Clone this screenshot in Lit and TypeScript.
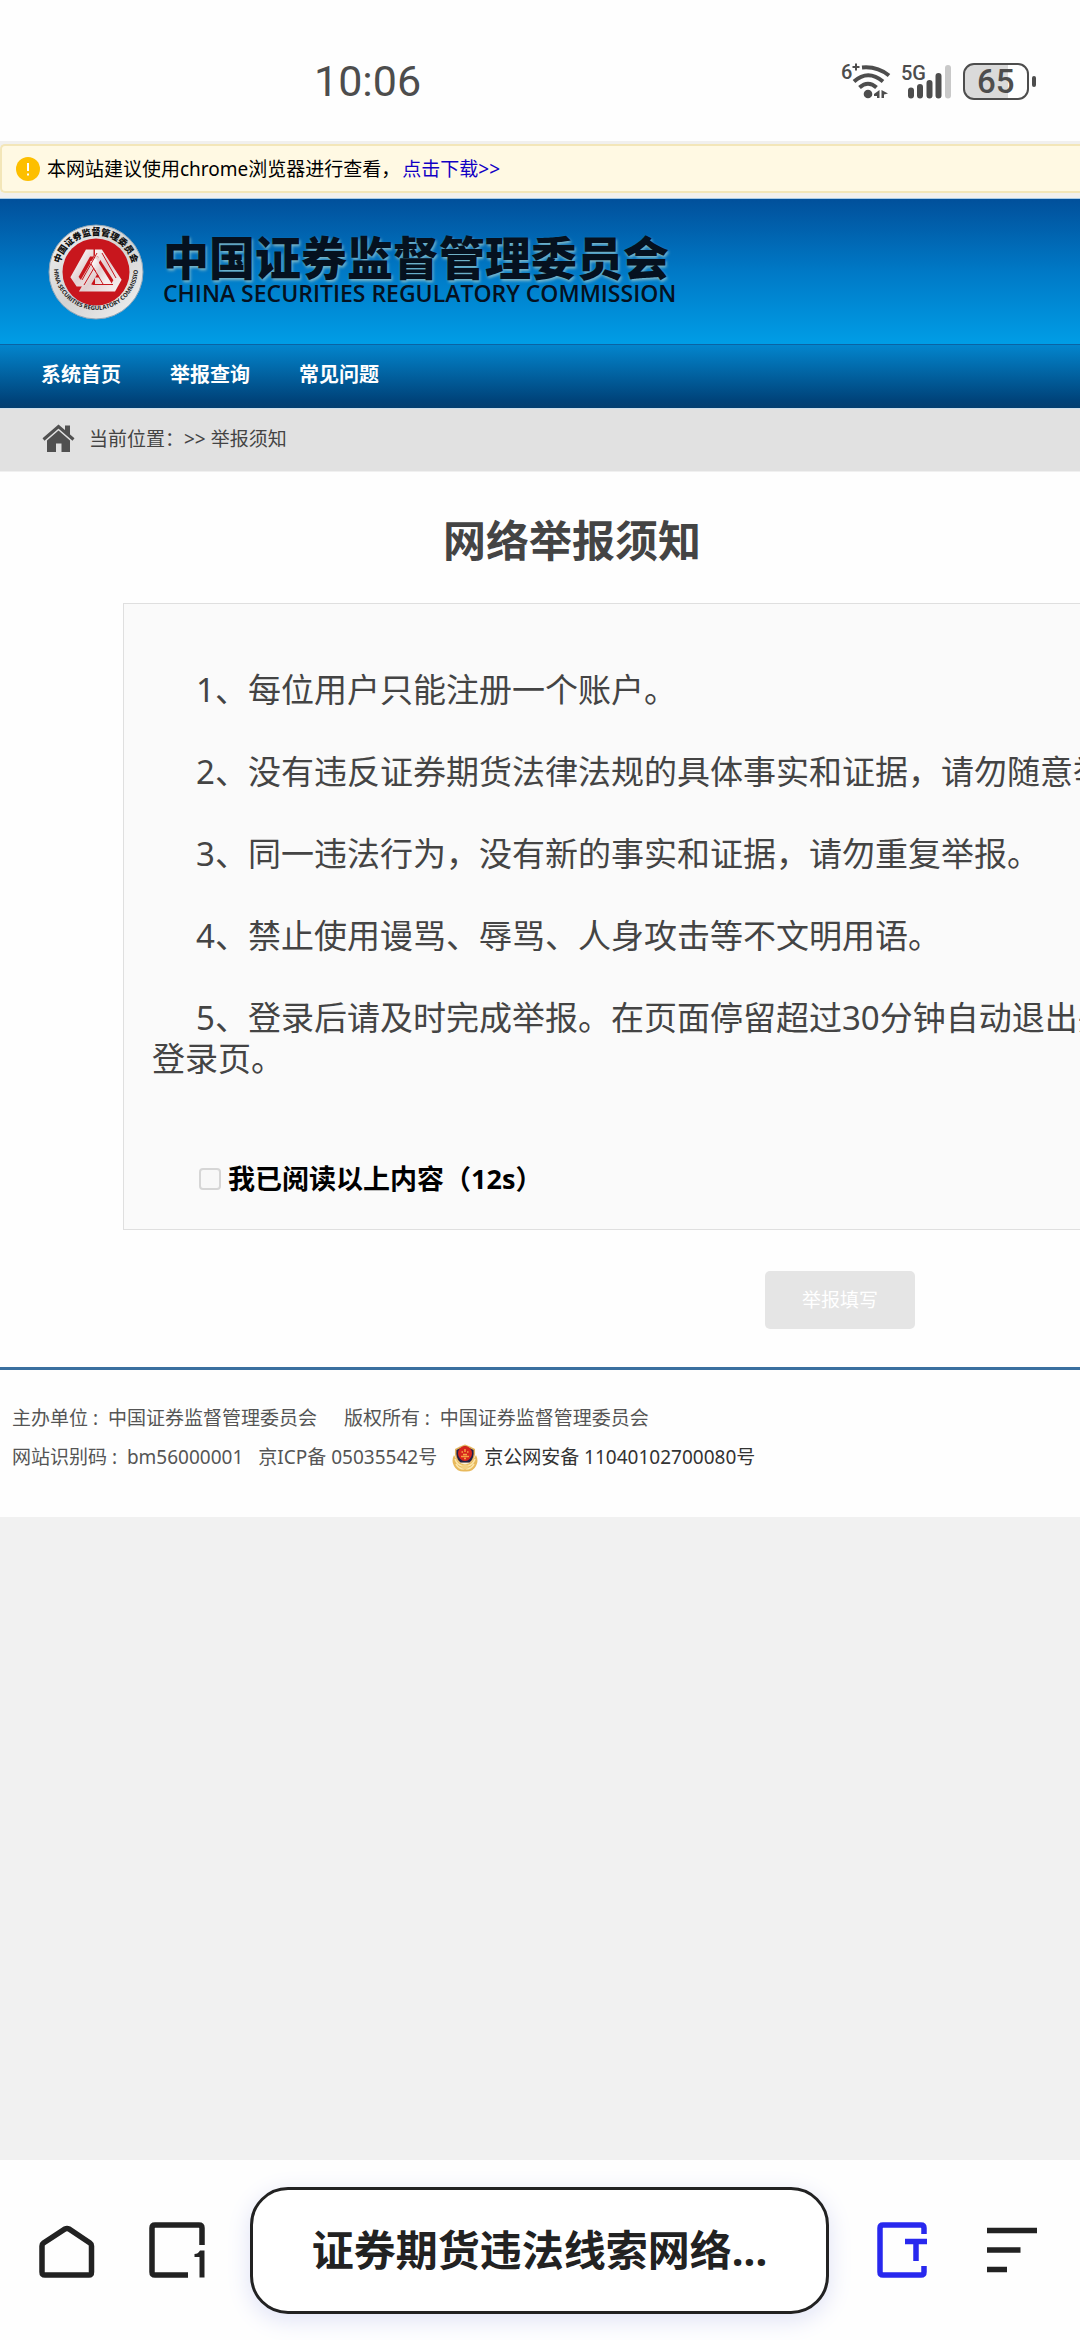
import { LitElement, html, css } from "lit";
import { customElement, state } from "lit/decorators.js";

@customElement("status-bar")
class StatusBar extends LitElement {
  static styles = css`
    :host { display: block; background: #fefefe; color: #4d4d4d; font-family: Roboto, "Noto Sans", sans-serif; }
    .bar { display: flex; align-items: center; justify-content: space-between; height: 141px; padding: 20px 43px 0 314px; box-sizing: border-box; }
    .clock { font-size: 43px; line-height: 48px; }
    .icons { display: flex; align-items: center; gap: 10px; }
    svg { display: block; }
    .tiny { font: 500 20px Roboto, sans-serif; fill: #4d4d4d; }
    .level { font: 500 33px Roboto, sans-serif; fill: #4d4d4d; }
  `;
  render() {
    return html`
      <div class="bar">
        <time class="clock">10:06</time>
        <div class="icons">
          <svg width="50" height="50" viewBox="842 55 50 50" role="img" aria-label="Wi-Fi">
            <text class="tiny" x="842" y="78">6</text>
            <path d="M853.500 66h7M857 62.500v7" stroke="#4d4d4d" stroke-width="2" />
            <g fill="none" stroke="#4d4d4d" stroke-width="4">
              <path d="M863 66.500Q878 65 890 74.500" />
              <path d="M855 80.500Q869 68 884 80.500" />
              <path d="M860.500 86.500Q869 79 877.500 86.500" />
            </g>
            <circle cx="869" cy="93" r="4.300" fill="#4d4d4d" />
            <path d="M880.500 89v8h-2.500v-2h-3v-2zM882.500 97v-8l6.500 3.500-4 1v3.500z" fill="#4d4d4d" />
          </svg>
          <svg width="51" height="50" viewBox="901 55 51 50" role="img" aria-label="5G">
            <text class="tiny" x="901" y="79">5G</text>
            <g stroke-width="6" stroke-linecap="round" stroke="#4d4d4d">
              <path d="M911 89.500V94.500M920 86V94.500M929.500 82V94.500M938.500 75V94.500" />
              <path d="M948 67V94.500" stroke="#c9c9c9" />
            </g>
          </svg>
          <svg width="75" height="50" viewBox="962 55 75 50" role="img" aria-label="65%">
            <path d="M974 63H1008V98H974Q965 98 965 88V73Q965 63 974 63Z" fill="#dadada" />
            <rect x="964" y="63" width="64" height="35" rx="10" fill="none" stroke="#4d4d4d" stroke-width="2" />
            <rect x="1032" y="75" width="4" height="11" rx="2" fill="#4d4d4d" />
            <text class="level" x="977" y="92">65</text>
          </svg>
        </div>
      </div>
    `;
  }
}

@customElement("site-header")
class SiteHeader extends LitElement {
  static styles = css`
    :host { display: block; }
    a { text-decoration: none; }
    .notice-wrap { background: #f1f0ee; padding: 3px 0 5px; border-bottom: 1px solid #a9cbe6; }
    .notice { display: flex; align-items: center; gap: 7px; height: 45px; padding-left: 14px; background: #fff9e3; border: 2px solid #f3e6b8; border-right: 0; border-radius: 5px 0 0 5px; font-size: 19px; line-height: 28px; color: #000; white-space: nowrap; }
    .notice a { color: #1200c4; margin-left: 2px; }
    .brand { display: flex; align-items: center; gap: 18px; height: 145px; padding-left: 47px; background: linear-gradient(#01509b, #0079c6 50%, #009de6); box-sizing: border-box; }
    .names { display: flex; flex-direction: column; padding-bottom: 6px; color: #05111f; white-space: nowrap; }
    .cn { font-size: 46px; line-height: 48px; font-weight: 900; text-shadow: 1px 2px 3px #7db9c9; }
    .en { font-family: "Open Sans", sans-serif; font-size: 23px; line-height: 24px; font-weight: 600; }
    .seal-cn { font-size: 9px; font-weight: 900; fill: #111; }
    .seal-en { font: 700 6px "Open Sans", sans-serif; fill: #222; }
    nav { display: flex; gap: 49px; align-items: center; height: 64px; padding: 0 0 4px 41px; background: linear-gradient(#0385cd, #00437a 88%, #043f70); border-top: 1px solid #0b63a4; box-sizing: border-box; }
    nav a { color: #fff; font-weight: 700; font-size: 20px; line-height: 28px; }
    .crumbs { display: flex; align-items: center; gap: 14px; height: 64px; padding: 0 0 3px 42px; background: #e1e1e1; border-bottom: 1px solid #f0f0f0; border-top: 1px solid #cfe0ec; box-sizing: border-box; color: #444; font-size: 19px; line-height: 28px; }
    svg { display: block; flex: none; }
  `;
  render() {
    return html`
      <div class="notice-wrap">
        <div class="notice">
          <svg width="24" height="24" viewBox="0 0 24 24" aria-hidden="true">
            <circle cx="12" cy="12" r="12" fill="#fdbf00" />
            <path d="M12 6v8M12 16.500v2" stroke="#fff" stroke-width="2" />
          </svg>
          <span>本网站建议使用chrome浏览器进行查看，<a href="#download">点击下载&gt;&gt;</a></span>
        </div>
      </div>
      <header class="brand">
        <svg width="98" height="98" viewBox="-49 -49 98 98" aria-hidden="true">
          <defs>
            <linearGradient id="rim" x1="0" y1="0" x2="1" y2="1">
              <stop offset="0" stop-color="#f4f4f4" /><stop offset=".5" stop-color="#d2d2d2" /><stop offset="1" stop-color="#f2f2f2" />
            </linearGradient>
            <linearGradient id="metal" x1="0" y1="0" x2="1" y2="1">
              <stop offset="0" stop-color="#ffffff" /><stop offset=".5" stop-color="#e2cfd0" /><stop offset="1" stop-color="#f6eeee" />
            </linearGradient>
            <path id="top" d="M-37 0A37 37 0 0 1 37 0" />
            <path id="bottom" d="M-42 -4A42 42 0 1 0 42 -4" />
          </defs>
          <circle r="47" fill="url(#rim)" stroke="#8fa6b8" stroke-width="1" />
          <circle r="33.500" fill="#c8161d" />
          <text class="seal-cn" text-anchor="middle"><textPath href="#top" startOffset="50%">中国证券监督管理委员会</textPath></text>
          <text class="seal-en" text-anchor="middle"><textPath href="#bottom" startOffset="50%">CHINA SECURITIES REGULATORY COMMISSION</textPath></text>
          <g fill="none" stroke="url(#metal)" stroke-width="7">
            <path d="M-2.500 -19H-8L-21.500 5L-17.500 11H-13L2 -15" />
            <path d="M-1 -19H4L21.500 8L17 16H-11L-1 -1" />
            <path d="M-3 -12L10 9H-1" />
          </g>
          <path d="M6 -19L20 6M-12 13L-2 -4M-5 -8L7 12M-3.500 12.500H17M1 -19L-14 8" fill="none" stroke="#c8161d" stroke-width="1" />
        </svg>
        <div class="names">
          <span class="cn">中国证券监督管理委员会</span>
          <span class="en">CHINA SECURITIES REGULATORY COMMISSION</span>
        </div>
      </header>
      <nav>
        <a href="#home">系统首页</a>
        <a href="#query">举报查询</a>
        <a href="#faq">常见问题</a>
      </nav>
      <div class="crumbs">
        <svg width="33" height="29" viewBox="0 0 33 29" aria-hidden="true">
          <path d="M1.500 15.500L16.500 2.500L31.500 15.500" fill="none" stroke="#505050" stroke-width="3" />
          <path d="M23 1.500h5v11l-5-4zM5 16.500L16.500 6.500L28 16.500V28H19.500V19.500H14V28H5Z" fill="#505050" />
        </svg>
        <span>当前位置：&gt;&gt; 举报须知</span>
      </div>
    `;
  }
}

@customElement("report-notice")
class ReportNotice extends LitElement {
  @state() private rules = [
    "1、每位用户只能注册一个账户。",
    "2、没有违反证券期货法律法规的具体事实和证据，请勿随意举",
    "3、同一违法行为，没有新的事实和证据，请勿重复举报。",
    "4、禁止使用谩骂、辱骂、人身攻击等不文明用语。",
    "5、登录后请及时完成举报。在页面停留超过30分钟自动退出并登录页。",
  ];
  @state() private seconds = 12;
  static styles = css`
    :host { display: block; overflow: hidden; background: #fefefe; }
    h1 { margin: 0; padding: 37px 0 30px 443px; font-size: 43px; line-height: 64px; font-weight: 700; color: #444; }
    .panel { margin: 0 -56px 0 123px; padding: 65px 16px 34px 28px; border: 1px solid #dfdfdf; background: #fafafa; }
    .panel p { margin: 0 0 41px; font-size: 33px; line-height: 41px; color: #444; text-indent: 44px; word-break: break-all; }
    .agree { display: flex; align-items: center; gap: 7px; margin: 84px 0 0 47px; font-size: 27px; line-height: 32px; font-weight: 700; color: #000; }
    .agree input { appearance: none; width: 22px; height: 22px; margin: 0; border: 2px solid #d6d6d6; border-radius: 4px; background: #f8f8f8; }
    .actions { display: flex; padding: 41px 0 38px 765px; }
    button { font: inherit; font-size: 19px; line-height: 28px; padding: 15px 37px; color: #fff; background: #e5e5e5; border: 0; border-radius: 5px; white-space: nowrap; }
  `;
  render() {
    return html`
      <h1>网络举报须知</h1>
      <section class="panel">
        ${this.rules.map((rule) => html`<p>${rule}</p>`)}
        <label class="agree"><input type="checkbox" disabled />我已阅读以上内容（${this.seconds}s）</label>
      </section>
      <div class="actions"><button type="button" disabled>举报填写</button></div>
    `;
  }
}

@customElement("site-footer")
class SiteFooter extends LitElement {
  static styles = css`
    :host { display: block; }
    footer { border-top: 3px solid #3a6f9f; background: #fefefe; padding: 29px 12px 40px; color: #555; font-size: 19px; line-height: 39px; white-space: nowrap; }
    .row { display: flex; align-items: center; }
    .org { gap: 27px; }
    .codes { gap: 15px; }
    .police { display: flex; align-items: center; gap: 6px; color: #333; text-decoration: none; }
    svg { display: block; }
  `;
  render() {
    return html`
      <footer>
        <div class="row org"><span>主办单位 :&nbsp; 中国证券监督管理委员会</span><span>版权所有 :&nbsp; 中国证券监督管理委员会</span></div>
        <div class="row codes">
          <span>网站识别码 :&nbsp; bm56000001</span><span>京ICP备 05035542号</span>
          <a class="police" href="#police">
            <svg width="26" height="28" viewBox="0 0 26 28" aria-hidden="true">
              <path d="M2 11Q-1 17 2 22Q5 28 13 27.500Q21 28 24 22Q27 17 24 11Q20 20 13 20Q6 20 2 11Z" fill="#e8b95c" />
              <path d="M3 15Q5 21 11 22M23 15Q21 21 15 22M4 20Q7 25 12 25M22 20Q19 25 14 25" stroke="#fbe6ab" stroke-width="1.500" fill="none" />
              <path d="M13 .5L18 2.500L23 5Q24 15 18.500 18.500H7.500Q2 15 3 5L8 2.500Z" fill="#e3b45c" />
              <path d="M13 2L21.500 6Q22.500 14.500 17.500 18.500H8.500Q3.500 14.500 4.500 6Z" fill="#252046" />
              <ellipse cx="13" cy="9.500" rx="7" ry="7.500" fill="#d6251d" />
              <path d="M13 5v3M9.500 8h1.500M15 8h1.500M9 12.500h8M11 10.500h4M12 14.500h2" stroke="#f5a142" stroke-width="1.500" />
              <path d="M9 22L13 19.500L17 22L15 25.500H11Z" fill="#f3d083" />
            </svg>
            <span>京公网安备 11040102700080号</span>
          </a>
        </div>
      </footer>
    `;
  }
}

@customElement("browser-bar")
class BrowserBar extends LitElement {
  static styles = css`
    :host { display: block; background: #fefefe; color: #222; }
    .bar { display: flex; align-items: center; justify-content: space-between; height: 180px; padding: 0 41px 0 37px; box-sizing: border-box; }
    .group { display: flex; align-items: center; gap: 50px; }
    .tools { gap: 56px; }
    button { font: inherit; color: inherit; border: 0; background: none; padding: 0; margin: 0; }
    .icon svg { display: block; }
    .address { flex: 1; margin: 0 46px 0 43px; height: 127px; border: 3px solid #222; border-radius: 38px; background: #fff; box-shadow: 0 6px 24px #dfe2f6; font-size: 42px; line-height: 60px; font-weight: 700; padding: 0 20px; white-space: nowrap; }
  `;
  render() {
    return html`
      <div class="bar">
        <div class="group">
          <button class="icon" aria-label="主页">
            <svg width="60" height="60" viewBox="37 2220 60 60" fill="none" stroke="#222" stroke-width="5.500">
              <path d="M67 2228.500Q68 2228.500 69 2229L90 2243Q91.500 2244 91.500 2246V2272Q91.500 2275 89 2275H45Q42 2275 42 2272V2246Q42 2244 43.500 2243L65 2229Q66 2228.500 67 2228.500Z" />
            </svg>
          </button>
          <button class="icon" aria-label="标签页">
            <svg width="60" height="60" viewBox="147 2220 60 60" fill="none" stroke="#222" stroke-width="5.500">
              <path d="M202 2245V2228Q202 2225 199 2225H155Q152 2225 152 2228V2272Q152 2275 155 2275H188" />
              <path d="M204.500 2277.500V2250.500H200Q198 2254 194.500 2254V2257H199.500V2277.500Z" fill="#222" stroke="none" />
            </svg>
          </button>
        </div>
        <button class="address">证券期货违法线索网络...</button>
        <div class="group tools">
          <button class="icon" aria-label="文字">
            <svg width="54" height="60" viewBox="874 2220 54 60" fill="none" stroke="#2828ee" stroke-width="5.500">
              <path d="M923 2234V2228Q923 2225 920 2225H882Q879 2225 879 2228V2272Q879 2275 882 2275H920Q923 2275 923 2272V2266" />
              <path d="M904 2241.500H926M915 2241V2261" />
            </svg>
          </button>
          <button class="icon" aria-label="菜单">
            <svg width="54" height="60" viewBox="984 2220 54 60" fill="none" stroke="#222" stroke-width="5.500">
              <path d="M986 2230.500H1036M986 2250H1019.500M986 2269.500H1006" />
            </svg>
          </button>
        </div>
      </div>
    `;
  }
}

@customElement("app-root")
class AppRoot extends LitElement {
  static styles = css`
    :host { display: flex; flex-direction: column; min-height: 100vh; overflow: hidden; background: #f1f1f1; font-family: "Noto Sans", "Noto Sans CJK SC", sans-serif; }
    browser-bar { margin-top: auto; }
  `;
  render() {
    return html`
      <status-bar></status-bar>
      <site-header></site-header>
      <report-notice></report-notice>
      <site-footer></site-footer>
      <browser-bar></browser-bar>
    `;
  }
}
